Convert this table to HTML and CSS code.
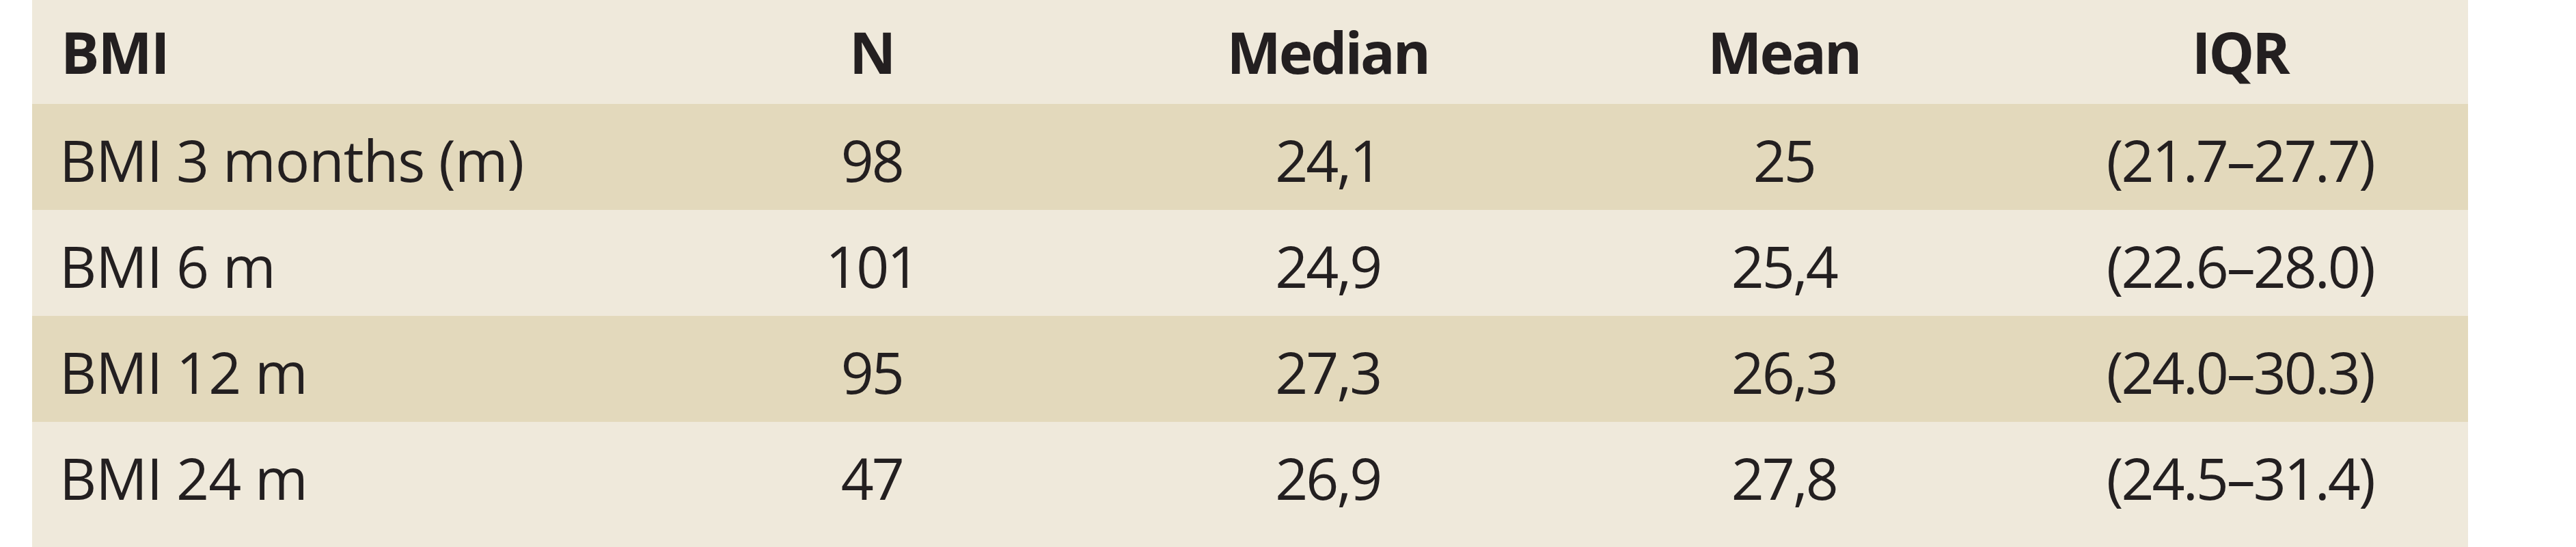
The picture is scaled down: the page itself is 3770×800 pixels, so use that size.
FILE: index.html
```html
<!DOCTYPE html>
<html lang="en">
<head>
<meta charset="utf-8">
<title>BMI table</title>
<link rel="stylesheet" href="styles.css">
</head>
<body>
<div class="panel">
  <div class="row head">
    <div class="cell first">BMI</div>
    <div class="cell">N</div>
    <div class="cell">Median</div>
    <div class="cell">Mean</div>
    <div class="cell">IQR</div>
  </div>
  <div class="row dark">
    <div class="cell first">BMI 3 months (m)</div>
    <div class="cell">98</div>
    <div class="cell">24,1</div>
    <div class="cell">25</div>
    <div class="cell">(21.7–27.7)</div>
  </div>
  <div class="row">
    <div class="cell first">BMI 6 m</div>
    <div class="cell">101</div>
    <div class="cell">24,9</div>
    <div class="cell">25,4</div>
    <div class="cell">(22.6–28.0)</div>
  </div>
  <div class="row dark">
    <div class="cell first">BMI 12 m</div>
    <div class="cell">95</div>
    <div class="cell">27,3</div>
    <div class="cell">26,3</div>
    <div class="cell">(24.0–30.3)</div>
  </div>
  <div class="row">
    <div class="cell first">BMI 24 m</div>
    <div class="cell">47</div>
    <div class="cell">26,9</div>
    <div class="cell">27,8</div>
    <div class="cell">(24.5–31.4)</div>
  </div>
</div>
</body>
</html>
```

FILE: styles.css
```css
html, body {
  margin: 0;
  padding: 0;
  background: #ffffff;
}

body {
  font-family: "Open Sans", "Noto Sans", "Liberation Sans", sans-serif;
  color: #231f20;
}

.panel {
  margin-left: 47px;
  width: 3565px;
  height: 800px;
  background: #efe9db;
  display: flex;
  flex-direction: column;
}

.row {
  display: grid;
  grid-template-columns: 895px repeat(4, 667.5px);
  height: 155px;
  box-sizing: border-box;
  padding-top: 8px;
  font-size: 84px;
  line-height: 147px;
  letter-spacing: -3px;
  font-weight: 400;
}

.row.head {
  height: 152px;
  padding-top: 0;
  line-height: 152px;
  font-weight: 700;
}

.row.dark {
  background: #e3d9bc;
}

.cell {
  text-align: center;
  white-space: nowrap;
}

.cell.first {
  text-align: left;
  padding-left: 40px;
  letter-spacing: -1px;
}

.row.head .cell.first {
  padding-left: 42px;
  letter-spacing: -2px;
}
```
